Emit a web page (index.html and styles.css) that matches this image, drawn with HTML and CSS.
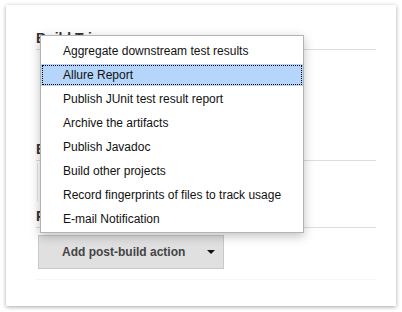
FILE: index.html
```html
<!DOCTYPE html>
<html lang="en">
<head>
  <meta charset="UTF-8" />
  <title>Post-build Actions</title>
  <link rel="stylesheet" href="styles.css">
</head>
<body>
  <div class="card">
    <div class="section">
      <div class="section-head">Build Triggers</div>
      <div class="section-body triggers"></div>
    </div>

    <div class="section">
      <div class="section-head">Build Environment</div>
      <div class="section-body env">
        <div class="env-box"></div>
      </div>
    </div>

    <div class="section">
      <div class="section-head">Post-build Actions</div>
      <div class="section-body actions">
        <button class="add-btn">
          <span>Add post-build action</span>
          <span class="caret"></span>
        </button>
      </div>
    </div>

    <div class="menu">
      <div class="menu-item">Aggregate downstream test results</div>
      <div class="menu-item selected">Allure Report</div>
      <div class="menu-item">Publish JUnit test result report</div>
      <div class="menu-item">Archive the artifacts</div>
      <div class="menu-item">Publish Javadoc</div>
      <div class="menu-item">Build other projects</div>
      <div class="menu-item">Record fingerprints of files to track usage</div>
      <div class="menu-item">E-mail Notification</div>
    </div>
  </div>
</body>
</html>
```

FILE: styles.css
```css
html, body {
  margin: 0;
  padding: 0;
  background: #fff;
  font-family: "Liberation Sans", Arial, sans-serif;
}

body {
  padding: 5px 6px;
}

.card {
  position: relative;
  box-sizing: border-box;
  width: 390px;
  height: 301px;
  padding: 25px 20px 0 30px;
  background: #fff;
  box-shadow: 0 1px 4px rgba(0, 0, 0, 0.35);
}

.section-head {
  height: 19px;
  line-height: 16px;
  font-size: 14px;
  font-weight: bold;
  color: #333;
  border-bottom: 1px solid #ddd;
  white-space: nowrap;
  overflow: hidden;
}

.triggers {
  height: 91px;
}

.env {
  height: 47px;
  padding-top: 2px;
  box-sizing: border-box;
}

.env-box {
  height: 38px;
  border-left: 1px solid #e4e4e4;
  margin-left: 1px;
}

.actions {
  padding: 7px 0 10px 2px;
  border-bottom: 1px dotted #f0f0f0;
}

.add-btn {
  display: flex;
  align-items: center;
  box-sizing: border-box;
  width: 186px;
  height: 34px;
  padding: 0 0 0 23px;
  background: #e0e0e0;
  border: 1px solid #c9c9c9;
  font-family: "Liberation Sans", Arial, sans-serif;
  font-size: 12px;
  font-weight: bold;
  color: #444;
  white-space: nowrap;
}

.caret {
  margin-left: 22px;
  width: 0;
  height: 0;
  border-left: 4px solid transparent;
  border-right: 4px solid transparent;
  border-top: 4px solid #111;
}

.menu {
  position: absolute;
  top: 30px;
  left: 34px;
  width: 262px;
  display: flex;
  flex-direction: column;
  gap: 2px;
  padding: 4px 0 2px;
  background: #fff;
  border: 1px solid #b4b4b4;
  box-shadow: 0 3px 10px rgba(0, 0, 0, 0.25);
}

.menu-item {
  height: 22px;
  line-height: 22px;
  padding-left: 22px;
  font-size: 12px;
  color: #111;
  white-space: nowrap;
}

.menu-item.selected {
  background: #b6d5fb;
  outline: 1px dotted #000;
  outline-offset: -2px;
}
```
